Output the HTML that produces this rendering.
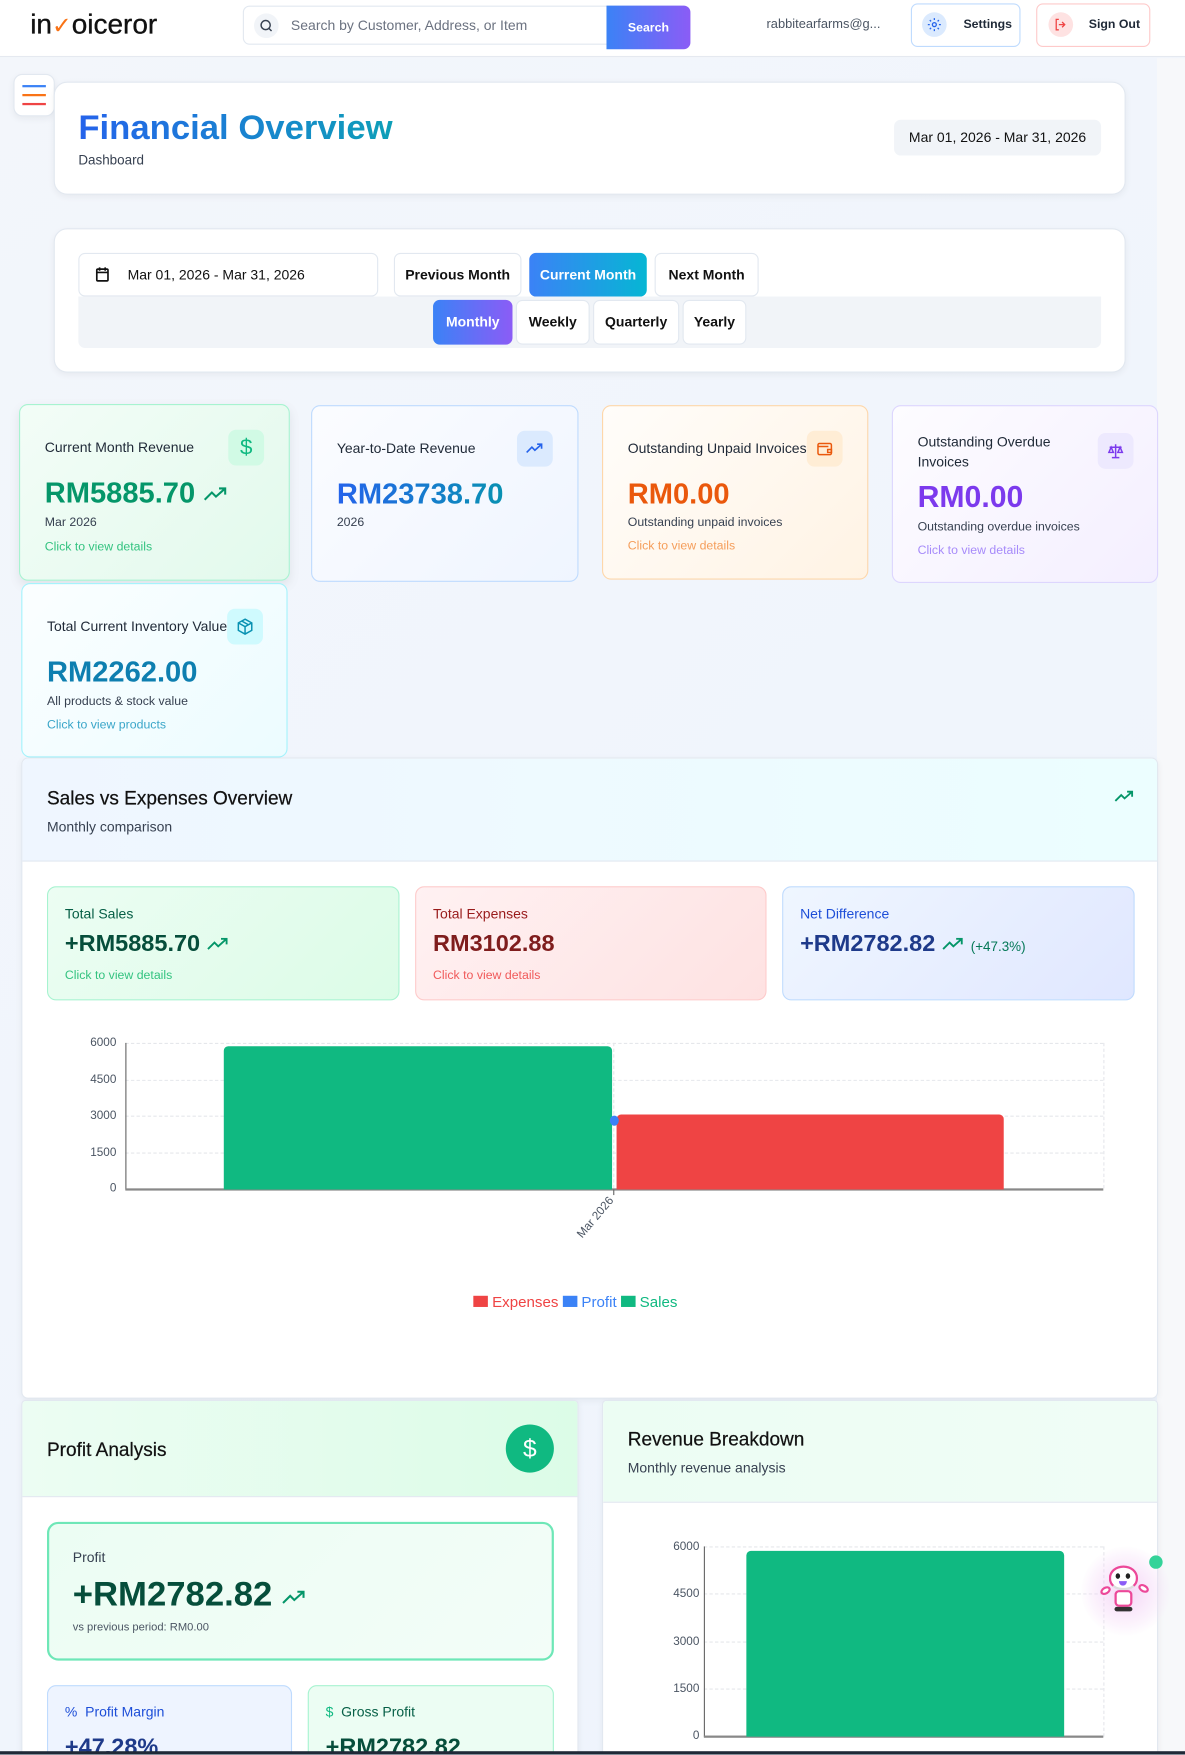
<!DOCTYPE html>
<html><head><meta charset="utf-8">
<style>
*{box-sizing:border-box;margin:0;padding:0}
html,body{width:1185px;height:1754px;overflow:hidden;background:#f0f5fc;font-family:"Liberation Sans",sans-serif;color:#1f2937}
#w{position:absolute;left:0;top:0;width:1059px;height:1568px;transform:scale(1.11898);transform-origin:0 0;background:linear-gradient(135deg,#f3f6fb,#eef4fd);overflow:hidden}
.a{position:absolute}
.card{position:absolute;background:#fff;border:1px solid #e2e8f0;border-radius:12px;box-shadow:0 2px 6px rgba(0,0,0,.05)}
.btn{position:absolute;background:#fff;border:1px solid #e2e8f0;border-radius:6px;font-size:12.5px;font-weight:bold;color:#111;display:flex;align-items:center;justify-content:center}
.stat{position:absolute;border-radius:8px;border:1px solid}
.stat .t{position:absolute;left:22px;font-size:12.5px;color:#1f2937}
.stat .v{position:absolute;left:22px;font-size:26px;font-weight:bold}
.stat .s{position:absolute;left:22px;font-size:11px;color:#374151}
.stat .l{position:absolute;left:22px;font-size:11px}
.ib{position:absolute;width:32px;height:32px;border-radius:7px;display:flex;align-items:center;justify-content:center}
.gl{position:absolute;height:0;border-top:1px dashed #e5e7eb}
.yl{position:absolute;font-size:10.5px;color:#4b5563;text-align:right;width:40px}
.h{font-weight:500;-webkit-text-stroke:.2px #111}
</style></head><body><div id="w">
<div class="a" style="left:0;top:0;width:1059px;height:51px;background:#fff;border-bottom:1px solid #e5e9f0"></div>
<div class="a" style="left:27px;top:8px;font-size:25px;font-weight:500;color:#111;letter-spacing:0px;-webkit-text-stroke:.3px #111">in<span style="color:#f97316;font-size:21px;-webkit-text-stroke:0">✓</span>oiceror</div>
<div class="a" style="left:217px;top:5px;width:400px;height:35px;border:1px solid #e2e8f0;border-radius:6px;background:#fff"></div>
<div class="a" style="left:227px;top:12px;width:22px;height:22px;border-radius:50%;background:#f1f4f8"></div>
<svg class="a" style="left:231px;top:16px" width="14" height="14" viewBox="0 0 24 24" fill="none" stroke="#374151" stroke-width="2.2"><circle cx="11" cy="11" r="7"/><path d="M20 20l-4-4"/></svg>
<div class="a" style="left:260px;top:16px;font-size:12.5px;color:#6b7280">Search by Customer, Address, or Item</div>
<div class="a" style="left:542px;top:5px;width:75px;height:39px;border-radius:0 6px 6px 0;background:linear-gradient(90deg,#3b82f6,#8b5cf6);color:#fff;font-size:11px;font-weight:bold;display:flex;align-items:center;justify-content:center">Search</div>
<div class="a" style="left:685px;top:16px;font-size:11.5px;color:#4b5563">rabbitearfarms@g...</div>
<div class="a" style="left:814px;top:3px;width:98px;height:39px;border:1px solid #bfdbfe;border-radius:6px;background:#fff"></div>
<div class="a" style="left:824px;top:11px;width:22px;height:22px;border-radius:50%;background:#dbeafe"></div>
<svg class="a" style="left:828px;top:15px" width="14" height="14" viewBox="0 0 24 24" fill="none" stroke="#2563eb" stroke-width="2"><circle cx="12" cy="12" r="3"/><path d="M12 2v3M12 19v3M2 12h3M19 12h3M5 5l2 2M17 17l2 2M5 19l2-2M17 7l2-2"/></svg>
<div class="a" style="left:861px;top:16px;font-size:11px;font-weight:bold;color:#1f2937">Settings</div>
<div class="a" style="left:926px;top:3px;width:102px;height:39px;border:1px solid #fecaca;border-radius:6px;background:#fff"></div>
<div class="a" style="left:937px;top:11px;width:22px;height:22px;border-radius:50%;background:#fee2e2"></div>
<svg class="a" style="left:941px;top:15px" width="14" height="14" viewBox="0 0 24 24" fill="none" stroke="#ef4444" stroke-width="2"><path d="M9 4H5v16h4M14 8l4 4-4 4M18 12H9"/></svg>
<div class="a" style="left:973px;top:16px;font-size:11px;font-weight:bold;color:#1f2937">Sign Out</div>
<div class="a" style="left:1034px;top:52px;width:25px;height:1516px;background:#f7f8fa"></div>
<div class="card" style="left:12px;top:66px;width:37px;height:38px;border-radius:8px"></div>
<div class="a" style="left:20px;top:76px;width:21px;height:2px;background:#3b82f6"></div>
<div class="a" style="left:20px;top:84px;width:21px;height:2px;background:#f97316"></div>
<div class="a" style="left:20px;top:92px;width:21px;height:2px;background:#ef4444"></div>
<div class="card" style="left:48px;top:73px;width:958px;height:101px"></div>
<div class="a" style="left:70px;top:96px;font-size:31px;font-weight:bold;background:linear-gradient(90deg,#2563eb,#0e9fb8);-webkit-background-clip:text;color:transparent">Financial Overview</div>
<div class="a" style="left:70px;top:136px;font-size:12px;color:#374151">Dashboard</div>
<div class="a" style="left:799px;top:107px;width:185px;height:32px;background:#f1f4f8;border-radius:6px;font-size:12.5px;color:#111;display:flex;align-items:center;justify-content:center">Mar 01, 2026 - Mar 31, 2026</div>
<div class="card" style="left:48px;top:204px;width:958px;height:129px"></div>
<div class="btn" style="left:70px;top:226px;width:268px;height:39px;font-weight:normal;justify-content:flex-start;padding-left:43px;font-size:12.5px">Mar 01, 2026 - Mar 31, 2026</div>
<svg class="a" style="left:85px;top:238px" width="13" height="14" viewBox="0 0 13 14" fill="none" stroke="#111" stroke-width="1.5"><rect x="1.5" y="2.5" width="10" height="10.5" rx="1"/><path d="M1.5 5.5h10M4 1v3M9 1v3"/></svg>
<div class="btn" style="left:352px;top:226px;width:114px;height:39px">Previous Month</div>
<div class="btn" style="left:473px;top:226px;width:105px;height:39px;border:none;background:linear-gradient(90deg,#3b82f6,#06b6d4);color:#fff">Current Month</div>
<div class="btn" style="left:585px;top:226px;width:93px;height:39px">Next Month</div>
<div class="a" style="left:70px;top:265px;width:914px;height:46px;background:#f1f4f8;border-radius:0 0 6px 6px"></div>
<div class="btn" style="left:387px;top:268px;width:71px;height:40px;border:none;background:linear-gradient(90deg,#3b82f6,#8b5cf6);color:#fff">Monthly</div>
<div class="btn" style="left:461px;top:268px;width:66px;height:40px">Weekly</div>
<div class="btn" style="left:530px;top:268px;width:77px;height:40px">Quarterly</div>
<div class="btn" style="left:610px;top:268px;width:57px;height:40px">Yearly</div>
<div class="stat" style="left:17px;top:361px;width:242px;height:158px;border-color:#a7f3d0;background:linear-gradient(135deg,#f3fdf7,#e2f9ec);box-shadow:0 4px 10px rgba(0,0,0,.08)">
<div class="t" style="top:31px">Current Month Revenue</div>
<div class="ib" style="left:186px;top:22px;background:#d1fae5;color:#10b981;font-size:20px">$</div>
<div class="v" style="top:63px;color:#059669">RM5885.70 <svg width="22" height="14" viewBox="0 0 24 14" fill="none" stroke="#059669" stroke-width="2"><path d="M1 12l7-7 4 4 9-8M15 1h6v6"/></svg></div>
<div class="s" style="top:99px">Mar 2026</div>
<div class="l" style="top:121px;color:#34c380">Click to view details</div></div>
<div class="stat" style="left:278px;top:362px;width:239px;height:158px;border-color:#bfdbfe;background:linear-gradient(135deg,#fbfcff,#eff5ff)">
<div class="t" style="top:31px">Year-to-Date Revenue</div>
<div class="ib" style="left:183px;top:22px;background:#dbeafe"><svg width="16" height="12" viewBox="0 0 24 14" fill="none" stroke="#2563eb" stroke-width="2.2"><path d="M1 12l7-7 4 4 9-8M15 1h6v6"/></svg></div>
<div class="v" style="top:63px;background:linear-gradient(90deg,#2563eb,#0891b2);-webkit-background-clip:text;color:transparent">RM23738.70</div>
<div class="s" style="top:98px">2026</div></div>
<div class="stat" style="left:538px;top:362px;width:238px;height:156px;border-color:#fed7aa;background:linear-gradient(135deg,#fffdfa,#fff3e4)">
<div class="t" style="top:31px">Outstanding Unpaid Invoices</div>
<div class="ib" style="left:182px;top:22px;background:#ffedd5"><svg width="16" height="16" viewBox="0 0 24 24" fill="none" stroke="#ea580c" stroke-width="2"><rect x="3" y="5" width="18" height="15" rx="2"/><path d="M3 9h14M16 13h5v4h-5z"/></svg></div>
<div class="v" style="top:63px;color:#ea580c">RM0.00</div>
<div class="s" style="top:98px">Outstanding unpaid invoices</div>
<div class="l" style="top:119px;color:#f59e5b">Click to view details</div></div>
<div class="stat" style="left:797px;top:362px;width:238px;height:159px;border-color:#ddd6fe;background:linear-gradient(135deg,#fdfcff,#f4efff)">
<div class="t" style="top:23px;line-height:18px">Outstanding Overdue<br>Invoices</div>
<div class="ib" style="left:183px;top:24px;background:#ede9fe"><svg width="16" height="16" viewBox="0 0 24 24" fill="none" stroke="#7c3aed" stroke-width="2"><path d="M12 3v18M7 21h10M4 7h16M6 7l-3 7h6zM18 7l-3 7h6z"/></svg></div>
<div class="v" style="top:66px;color:#7c3aed;font-size:27px">RM0.00</div>
<div class="s" style="top:102px">Outstanding overdue invoices</div>
<div class="l" style="top:123px;color:#a78bfa">Click to view details</div></div>
<div class="stat" style="left:19px;top:521px;width:238px;height:156px;border-color:#a5f3fc;background:linear-gradient(135deg,#fbfeff,#ecfcff)">
<div class="t" style="top:31px">Total Current Inventory Value</div>
<div class="ib" style="left:183px;top:22px;background:#cffafe"><svg width="16" height="16" viewBox="0 0 24 24" fill="none" stroke="#0891b2" stroke-width="2"><path d="M12 2l9 5v10l-9 5-9-5V7zM3 7l9 5 9-5M12 12v10M7.5 4.5l9 5"/></svg></div>
<div class="v" style="top:63px;color:#0e7fb0">RM2262.00</div>
<div class="s" style="top:99px">All products &amp; stock value</div>
<div class="l" style="top:120px;color:#3aa6c9">Click to view products</div></div>
<div class="card" style="left:19px;top:677px;width:1016px;height:573px;border-radius:6px;overflow:hidden">
<div class="a" style="left:0;top:0;width:1016px;height:92px;background:linear-gradient(90deg,#eff6ff,#ecfeff);border-bottom:1px solid #e2e8f0"></div>
<div class="a h" style="left:22px;top:26px;font-size:17px;color:#111">Sales vs Expenses Overview</div>
<div class="a" style="left:22px;top:54px;font-size:12.5px;color:#374151">Monthly comparison</div>
<svg class="a" style="left:976px;top:28px" width="18" height="12" viewBox="0 0 24 14" fill="none" stroke="#059669" stroke-width="2.2"><path d="M1 12l7-7 4 4 9-8M15 1h6v6"/></svg>
<div class="stat" style="left:22px;top:114px;width:315px;height:102px;border-color:#a7f3d0;background:linear-gradient(135deg,#ecfdf3,#dcfce7)">
<div class="a" style="left:15px;top:17px;font-size:12.5px;color:#065f46">Total Sales</div>
<div class="a" style="left:15px;top:39px;font-size:21px;font-weight:bold;color:#064e3b">+RM5885.70 <svg width="20" height="12" viewBox="0 0 24 14" fill="none" stroke="#059669" stroke-width="2"><path d="M1 12l7-7 4 4 9-8M15 1h6v6"/></svg></div>
<div class="a" style="left:15px;top:73px;font-size:11px;color:#34c380">Click to view details</div></div>
<div class="stat" style="left:351px;top:114px;width:314px;height:102px;border-color:#fecaca;background:linear-gradient(135deg,#fff1f2,#fee2e2)">
<div class="a" style="left:15px;top:17px;font-size:12.5px;color:#991b1b">Total Expenses</div>
<div class="a" style="left:15px;top:39px;font-size:21px;font-weight:bold;color:#7f1d1d">RM3102.88</div>
<div class="a" style="left:15px;top:73px;font-size:11px;color:#f05a5a">Click to view details</div></div>
<div class="stat" style="left:679px;top:114px;width:315px;height:102px;border-color:#bfdbfe;background:linear-gradient(135deg,#eff6ff,#e0e7ff)">
<div class="a" style="left:15px;top:17px;font-size:12.5px;color:#1d4ed8">Net Difference</div>
<div class="a" style="left:15px;top:39px;font-size:21px;font-weight:bold;color:#1e3a8a;white-space:nowrap">+RM2782.82 <svg width="20" height="12" viewBox="0 0 24 14" fill="none" stroke="#059669" stroke-width="2"><path d="M1 12l7-7 4 4 9-8M15 1h6v6"/></svg> <span style="font-size:12px;font-weight:normal;color:#047857">(+47.3%)</span></div></div>
</div>
<div class="gl" style="left:112px;top:932px;width:874px"></div>
<div class="gl" style="left:112px;top:965px;width:874px"></div>
<div class="gl" style="left:112px;top:997px;width:874px"></div>
<div class="gl" style="left:112px;top:1030px;width:874px"></div>
<div class="a" style="left:986px;top:932px;height:130px;border-left:1px dashed #e5e7eb"></div>
<div class="a" style="left:548px;top:932px;height:130px;border-left:1px dashed #e5e7eb"></div>
<div class="a" style="left:112px;top:932px;width:1px;height:131px;background:#666"></div>
<div class="a" style="left:112px;top:1062px;width:874px;height:1.5px;background:#888"></div>
<div class="yl" style="left:64px;top:926px">6000</div>
<div class="yl" style="left:64px;top:959px">4500</div>
<div class="yl" style="left:64px;top:991px">3000</div>
<div class="yl" style="left:64px;top:1024px">1500</div>
<div class="yl" style="left:64px;top:1056px">0</div>
<div class="a" style="left:200px;top:935px;width:347px;height:128px;background:#10b981;border-radius:4px 4px 0 0"></div>
<div class="a" style="left:551px;top:996px;width:346px;height:67px;background:#ef4444;border-radius:4px 4px 0 0"></div>
<div class="a" style="left:545px;top:997px;width:8px;height:9px;border-radius:50%;background:#3b82f6"></div>
<div class="a" style="left:548px;top:1063px;width:1px;height:5px;background:#666"></div>
<div class="a" style="left:510px;top:1082px;font-size:10.5px;color:#4b5563;transform:rotate(-50deg)">Mar 2026</div>
<div class="a" style="left:423px;top:1156px;font-size:13.5px;white-space:nowrap"><span style="display:inline-block;width:13px;height:10px;background:#ef4444"></span> <span style="color:#ef4444">Expenses</span> <span style="display:inline-block;width:13px;height:10px;background:#3b82f6"></span> <span style="color:#3b82f6">Profit</span> <span style="display:inline-block;width:13px;height:10px;background:#10b981"></span> <span style="color:#10b981">Sales</span></div>
<div class="card" style="left:19px;top:1251px;width:498px;height:330px;border-radius:4px;overflow:hidden">
<div class="a" style="left:0;top:0;width:498px;height:86px;background:linear-gradient(90deg,#ecfdf3,#dcfce7);border-bottom:1px solid #e2e8f0"></div>
<div class="a h" style="left:22px;top:34px;font-size:17px;color:#111">Profit Analysis</div>
<div class="a" style="left:432px;top:21px;width:43px;height:43px;border-radius:50%;background:#10b981;color:#fff;font-size:22px;display:flex;align-items:center;justify-content:center">$</div>
<div class="a" style="left:22px;top:108px;width:453px;height:124px;border:2px solid #6ee7b7;border-radius:10px;background:linear-gradient(135deg,#ecfdf3,#f3fdf8)"></div>
<div class="a" style="left:45px;top:133px;font-size:12.5px;color:#374151">Profit</div>
<div class="a" style="left:45px;top:155px;font-size:31px;font-weight:bold;color:#064e3b">+RM2782.82 <svg width="22" height="14" viewBox="0 0 24 14" fill="none" stroke="#059669" stroke-width="2"><path d="M1 12l7-7 4 4 9-8M15 1h6v6"/></svg></div>
<div class="a" style="left:45px;top:197px;font-size:10px;color:#4b5563">vs previous period: RM0.00</div>
<div class="a" style="left:22px;top:254px;width:219px;height:90px;border:1px solid #bfdbfe;border-radius:8px;background:#eef4ff"></div>
<div class="a" style="left:38px;top:271px;font-size:12.5px;color:#1d4ed8">%&nbsp; Profit Margin</div>
<div class="a" style="left:38px;top:298px;font-size:21px;font-weight:bold;color:#1e3a8a">+47.28%</div>
<div class="a" style="left:255px;top:254px;width:220px;height:90px;border:1px solid #a7f3d0;border-radius:8px;background:#ecfdf3"></div>
<div class="a" style="left:271px;top:271px;font-size:12.5px;color:#065f46"><span style="color:#10b981">$</span>&nbsp; Gross Profit</div>
<div class="a" style="left:271px;top:298px;font-size:21px;font-weight:bold;color:#064e3b">+RM2782.82</div>
</div>
<div class="card" style="left:538px;top:1251px;width:497px;height:330px;border-radius:4px;overflow:hidden">
<div class="a" style="left:0;top:0;width:497px;height:91px;background:linear-gradient(90deg,#ecfdf3,#f0fdf6);border-bottom:1px solid #e2e8f0"></div>
<div class="a h" style="left:22px;top:25px;font-size:17px;color:#111">Revenue Breakdown</div>
<div class="a" style="left:22px;top:53px;font-size:12.5px;color:#374151">Monthly revenue analysis</div>
</div>
<div class="gl" style="left:629px;top:1382px;width:357px"></div>
<div class="gl" style="left:629px;top:1424px;width:357px"></div>
<div class="gl" style="left:629px;top:1467px;width:357px"></div>
<div class="gl" style="left:629px;top:1509px;width:357px"></div>
<div class="a" style="left:986px;top:1382px;height:170px;border-left:1px dashed #e5e7eb"></div>
<div class="a" style="left:629px;top:1382px;width:1px;height:170px;background:#666"></div>
<div class="a" style="left:629px;top:1551px;width:357px;height:1.5px;background:#888"></div>
<div class="yl" style="left:585px;top:1376px">6000</div>
<div class="yl" style="left:585px;top:1418px">4500</div>
<div class="yl" style="left:585px;top:1461px">3000</div>
<div class="yl" style="left:585px;top:1503px">1500</div>
<div class="yl" style="left:585px;top:1545px">0</div>
<div class="a" style="left:667px;top:1386px;width:284px;height:166px;background:#10b981;border-radius:4px 4px 0 0"></div>
<div class="a" style="left:966px;top:1382px;width:80px;height:80px;border-radius:50%;background:radial-gradient(circle,rgba(236,180,240,.55),rgba(245,220,248,.3) 55%,rgba(255,255,255,0) 72%)"></div>
<div class="a" style="left:983px;top:1418px;width:10px;height:7px;border-radius:50%;background:#fff;border:2px solid #ec4899;transform:rotate(-30deg)"></div>
<div class="a" style="left:1017px;top:1416px;width:10px;height:7px;border-radius:50%;background:#fff;border:2px solid #ec4899;transform:rotate(30deg)"></div>
<div class="a" style="left:991px;top:1399px;width:26px;height:22px;border-radius:50% 50% 45% 45%;background:#fff;border:2px solid #ec4899;border-bottom-color:#ddd"></div>
<div class="a" style="left:997px;top:1406px;width:4px;height:5px;border-radius:50%;background:#222"></div>
<div class="a" style="left:1006px;top:1406px;width:4px;height:5px;border-radius:50%;background:#222"></div>
<div class="a" style="left:1000px;top:1413px;width:7px;height:4px;border-radius:0 0 4px 4px;background:#8b5cf6"></div>
<div class="a" style="left:996px;top:1421px;width:16px;height:15px;border-radius:4px;background:#fff;border:2px solid #ec4899"></div>
<div class="a" style="left:996px;top:1436px;width:16px;height:4px;background:#333;border-radius:2px"></div>
<div class="a" style="left:1027px;top:1390px;width:12px;height:12px;border-radius:50%;background:#34d399"></div>
<div class="a" style="left:0;top:1565px;width:1059px;height:3px;background:#1f2937"></div>
</div></body></html>
